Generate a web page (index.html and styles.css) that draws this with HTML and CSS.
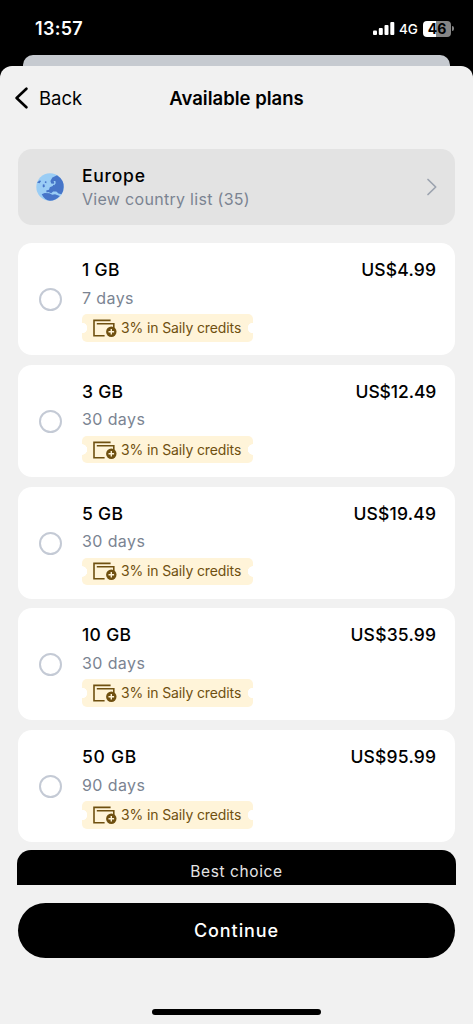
FILE: index.html
```html
<!DOCTYPE html>
<html lang="en">
<head>
<meta charset="utf-8">
<title>Available plans</title>
<link rel="stylesheet" href="styles.css">
</head>
<body>
<svg class="defs" width="0" height="0" aria-hidden="true">
  <symbol id="wallet" viewBox="0 0 25 20">
    <path d="M18.6 2.4H2v15.4h10.6M4.8 5.7h17v4.5" fill="none" stroke="#6f5010" stroke-width="1.6"/>
    <circle cx="19.3" cy="13.7" r="5.2" fill="#6f5010"/>
    <path d="M19.3 10.9v5.6M16.5 13.7h5.6" stroke="#fff4d9" stroke-width="1.4"/>
  </symbol>
</svg>
<div class="phone">
  <header class="status">
    <span class="time">13:57</span>
    <span class="indicators">
      <svg width="22" height="14" viewBox="0 0 22 14" fill="#fff"><rect x="0" y="8.5" width="4" height="4.5" rx="1"/><rect x="5.8" y="6" width="4" height="7" rx="1"/><rect x="11.5" y="3" width="4" height="10" rx="1"/><rect x="17.3" y="0" width="4" height="13" rx="1"/></svg>
      <span class="network">4G</span>
      <span class="battery">46</span><i class="battery-tip"></i>
    </span>
  </header>
  <div class="sheet-behind"></div>
  <main class="sheet">
    <nav class="nav">
      <svg width="14" height="22" viewBox="0 0 14 22" fill="none" stroke="#000" stroke-width="2.6" stroke-linecap="round" stroke-linejoin="round"><path d="M12.4 1.7 2.6 11l9.8 9.3"/></svg>
      <span class="back">Back</span>
      <h1 class="heading">Available plans</h1>
    </nav>
    <section class="region">
      <svg class="globe" width="28" height="28" viewBox="0 0 28 28">
        <circle cx="14" cy="14" r="13.7" fill="#9acdf5"/>
        <path d="M16 4.8 21 2.3Q28 7 27.7 14q0 4-2.2 7.2l-3-.8-2.2-2-3.2.2-1.8 1.6-3-1.2-1.7.6-.4-2 2.8-.8.8-2.6 3-1.2.7-2.2-2.3-.4-.8-2.4 1.7-3ZM1 9.5l3-2.3 1 1-1.5 2.1ZM9 8.2l1.5.4-.2 1.6-1.5-.5ZM6.8 11.6l1.5-.3.6 2.2-1.2 1-1-.8ZM5.7 21.2l3-1.2 4.8.2 2.7 1.6 2.8-.5 4.8 1.6Q19.5 27.7 14 27.7q-5 0-8.3-6.5Z" fill="#4775c8"/>
        <path d="m17.6 8 .7 2-1.6 1.6 1.5.7 1.5-2-.3-2.3Z" fill="#9acdf5"/>
      </svg>
      <div class="region-text">
        <div class="title europe">Europe</div>
        <div class="region-link">View country list (35)</div>
      </div>
      <svg class="chevron" width="12" height="18" viewBox="0 0 12 18" fill="none" stroke="#9ca3af" stroke-width="1.7" stroke-linecap="round" stroke-linejoin="round"><path d="m2 1.5 7.7 7.5L2 16.5"/></svg>
    </section>
    <div class="plans">
      <article class="plan"><i class="radio"></i><div class="info"><div class="title">1 GB</div><div class="days">7 days</div><div class="credit"><svg width="25" height="20"><use href="#wallet"/></svg><span>3% in Saily credits</span></div></div><div class="price">US$4.99</div></article>
      <article class="plan"><i class="radio"></i><div class="info"><div class="title">3 GB</div><div class="days">30 days</div><div class="credit"><svg width="25" height="20"><use href="#wallet"/></svg><span>3% in Saily credits</span></div></div><div class="price narrow">US$12.49</div></article>
      <article class="plan"><i class="radio"></i><div class="info"><div class="title">5 GB</div><div class="days">30 days</div><div class="credit"><svg width="25" height="20"><use href="#wallet"/></svg><span>3% in Saily credits</span></div></div><div class="price">US$19.49</div></article>
      <article class="plan"><i class="radio"></i><div class="info"><div class="title">10 GB</div><div class="days">30 days</div><div class="credit"><svg width="25" height="20"><use href="#wallet"/></svg><span>3% in Saily credits</span></div></div><div class="price">US$35.99</div></article>
      <article class="plan"><i class="radio"></i><div class="info"><div class="title wide">50 GB</div><div class="days">90 days</div><div class="credit"><svg width="25" height="20"><use href="#wallet"/></svg><span>3% in Saily credits</span></div></div><div class="price">US$95.99</div></article>
    </div>
    <div class="best">Best choice</div>
    <button class="continue">Continue</button>
    <div class="home"></div>
  </main>
</div>
</body>
</html>
```
FILE: styles.css
```css
* { box-sizing: border-box; }
body { margin: 0; background: #000; font-family: Inter, "Liberation Sans", sans-serif; color: #000; }
.defs { display: none; }
.phone { display: flex; flex-direction: column; width: 473px; height: 1024px; overflow: hidden; background: #000; }
.status { display: flex; justify-content: space-between; height: 55px; padding: 18px 19px 0 35px; color: #fff; }
.time { font-size: 18px; font-weight: 600; line-height: 21px; letter-spacing: .3px; }
.indicators { display: flex; height: 21px; align-items: center; }
.network { width: 19px; margin-left: 4px; font-size: 13.5px; font-weight: 500; letter-spacing: -.1px; }
.battery { width: 28px; height: 16px; margin-left: 5px; border-radius: 4px; background: linear-gradient(90deg, #fff 46%, #858585 46%); color: #000; font-size: 14px; font-weight: 700; line-height: 16px; text-align: center; }
.battery-tip { width: 2px; height: 5px; margin-left: 1px; border-radius: 0 2px 2px 0; background: #858585; }
.sheet-behind { flex: none; height: 11px; margin: 0 23px; border-radius: 10px 10px 0 0; background: #c6cad0; }
.sheet { display: flex; flex: 1; flex-direction: column; padding: 0 18px; border-radius: 12px 12px 0 0; background: #f1f1f1; }
.nav { display: grid; grid-template-columns: 14px 90px 1fr 100px; align-items: center; height: 64px; margin: 0 0 19px -4px; }
.back { padding-left: 11px; font-size: 18.5px; line-height: 24px; letter-spacing: 0; }
.heading { margin: 0; font-size: 18.5px; font-weight: 600; line-height: 24px; letter-spacing: 0; text-align: center; white-space: nowrap; }
.region { display: flex; align-items: center; height: 76px; padding: 0 17px 0 18px; border-radius: 14px; background: #e3e3e3; }
.region-text { flex: 1; margin-left: 18px; }
.title { font-size: 17.5px; font-weight: 500; line-height: 24px; letter-spacing: .3px; }
.europe { letter-spacing: .75px; }
.wide { letter-spacing: .7px; }
.region-link { color: #7b8492; font-size: 16px; line-height: 23px; letter-spacing: .3px; }
.plans { display: flex; flex-direction: column; gap: 9.75px; margin-top: 18px; }
.plan { display: flex; height: 112px; padding: 15px 19px 0 20.5px; border-radius: 14px; background: #fff; }
.radio { flex: none; width: 23px; height: 23px; margin-top: 30px; border: 2.3px solid #c4cad5; border-radius: 50%; }
.info { flex: 1; margin-left: 20.5px; }
.days { margin-top: 3.5px; color: #7b8492; font-size: 16px; line-height: 24px; letter-spacing: .4px; }
.credit { display: flex; align-items: center; width: 171px; height: 27.5px; margin-top: 4.5px; padding-left: 10px; border-radius: 5px; background: radial-gradient(circle at 0 50%, #fff 5px, transparent 5.5px), radial-gradient(circle at 100% 50%, #fff 5px, transparent 5.5px), #fff4d9; color: #6f5010; font-size: 14px; letter-spacing: -.12px; line-height: 20px; white-space: nowrap; }
.credit span { margin-left: 4px; }
.price { margin-right: -.2px; font-size: 17.5px; font-weight: 500; line-height: 24px; letter-spacing: .2px; }
.narrow { letter-spacing: -.1px; }
.best { height: 34.5px; margin: 8px -1px 0; padding-top: 10px; border-radius: 14px 14px 0 0; background: #000; color: #e5e5e5; font-size: 15.5px; line-height: 23px; letter-spacing: .6px; text-align: center; overflow: hidden; }
.continue { height: 55px; margin-top: 18.5px; padding: 0; border: 0; border-radius: 28px; background: #000; color: #fff; font: 500 18px/55px Inter, "Liberation Sans", sans-serif; letter-spacing: .9px; }
.home { width: 169px; height: 6px; margin: 51px auto 0; border-radius: 3px; background: #000; }
```
